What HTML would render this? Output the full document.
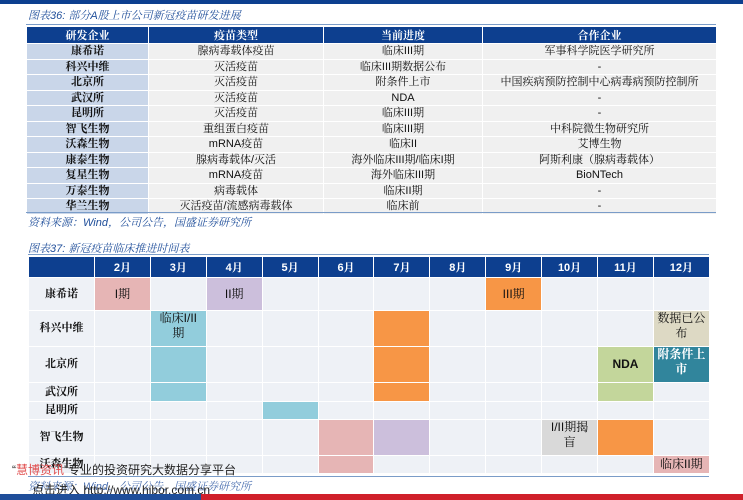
<!DOCTYPE html>
<html><head><meta charset="utf-8"><style>
body{margin:0;width:743px;height:500px;overflow:hidden;background:#fff;font-family:"Liberation Sans","Noto Serif CJK SC","Noto Sans CJK SC",serif;position:relative}
.abs{position:absolute}
.ttl{color:#1f4e9a;font-style:italic;font-size:11px}
table{border-collapse:collapse;table-layout:fixed;position:absolute}
td{border:1px solid #fff;text-align:center;font-size:11px;padding:0;color:#111;line-height:12px;overflow:hidden}
.t1 th,.t2 th{background:#0d3f8f;color:#fff;font-size:11px;font-weight:bold;border:1px solid #fff;padding:0}
.t1 td{background:#f0f0f0;height:14.5px}
.t1 td.f{background:#c9d6e9;font-weight:bold}
.t2 td{background:#eef1f6;font-size:12px;line-height:15px}
.t2 td.f{font-weight:bold;font-size:11px}
.pk{background:#e6b5b5!important}.lv{background:#ccbfdc!important}.or{background:#f79646!important}
.lb{background:#92cddc!important}.kh{background:#ddd9c4!important}.te{background:#31859c!important;color:#fff!important;font-weight:bold}
.gr{background:#c3d69b!important}.gy{background:#d9d9d9!important}
</style></head><body>
<div class="abs" style="left:0;top:0;width:743px;height:4px;background:#0d3f8f"></div>
<div class="abs ttl" style="left:28px;top:7px">图表36: 部分A股上市公司新冠疫苗研发进展</div>
<div class="abs" style="left:26px;top:24px;width:690px;height:1px;background:#7a9cc8"></div>
<table class="t1" style="left:26px;top:26px;width:690px">
<col style="width:122px"><col style="width:175px"><col style="width:159px"><col style="width:234px">
<tr style="height:14px"><th>研发企业</th><th>疫苗类型</th><th>当前进度</th><th>合作企业</th></tr>
<tr><td class="f">康希诺</td><td>腺病毒载体疫苗</td><td>临床III期</td><td>军事科学院医学研究所</td></tr>
<tr><td class="f">科兴中维</td><td>灭活疫苗</td><td>临床III期数据公布</td><td>-</td></tr>
<tr><td class="f">北京所</td><td>灭活疫苗</td><td>附条件上市</td><td>中国疾病预防控制中心病毒病预防控制所</td></tr>
<tr><td class="f">武汉所</td><td>灭活疫苗</td><td>NDA</td><td>-</td></tr>
<tr><td class="f">昆明所</td><td>灭活疫苗</td><td>临床III期</td><td>-</td></tr>
<tr><td class="f">智飞生物</td><td>重组蛋白疫苗</td><td>临床III期</td><td>中科院微生物研究所</td></tr>
<tr><td class="f">沃森生物</td><td>mRNA疫苗</td><td>临床II</td><td>艾博生物</td></tr>
<tr><td class="f">康泰生物</td><td>腺病毒载体/灭活</td><td>海外临床III期/临床I期</td><td>阿斯利康（腺病毒载体）</td></tr>
<tr><td class="f">复星生物</td><td>mRNA疫苗</td><td>海外临床III期</td><td>BioNTech</td></tr>
<tr><td class="f">万泰生物</td><td>病毒载体</td><td>临床II期</td><td>-</td></tr>
<tr><td class="f">华兰生物</td><td>灭活疫苗/流感病毒载体</td><td>临床前</td><td>-</td></tr>
</table>
<div class="abs" style="left:26px;top:212px;width:690px;height:1px;background:#7a9cc8"></div>
<div class="abs ttl" style="left:28px;top:214px">资料来源：Wind，公司公告，国盛证券研究所</div>
<div class="abs ttl" style="left:28px;top:240px">图表37: 新冠疫苗临床推进时间表</div>
<div class="abs" style="left:28px;top:254px;width:681px;height:1px;background:#7a9cc8"></div>
<table class="t2" style="left:28px;top:256px;width:681px">
<col style="width:66px"><col span="11" style="width:55.9px">
<tr style="height:21px"><th></th><th>2月</th><th>3月</th><th>4月</th><th>5月</th><th>6月</th><th>7月</th><th>8月</th><th>9月</th><th>10月</th><th>11月</th><th>12月</th></tr>
<tr style="height:33px"><td class="f">康希诺</td><td class="pk">I期</td><td></td><td class="lv">II期</td><td></td><td></td><td></td><td></td><td class="or">III期</td><td></td><td></td><td></td></tr>
<tr style="height:36px"><td class="f">科兴中维</td><td></td><td class="lb" style="vertical-align:top">临床I/II<br>期</td><td></td><td></td><td></td><td class="or"></td><td></td><td></td><td></td><td></td><td class="kh" style="vertical-align:top">数据已公<br>布</td></tr>
<tr style="height:36px"><td class="f">北京所</td><td></td><td class="lb"></td><td></td><td></td><td></td><td class="or"></td><td></td><td></td><td></td><td class="gr" style="font-weight:bold">NDA</td><td class="te" style="vertical-align:top">附条件上<br>市</td></tr>
<tr style="height:19px"><td class="f">武汉所</td><td></td><td class="lb"></td><td></td><td></td><td></td><td class="or"></td><td></td><td></td><td></td><td class="gr"></td><td></td></tr>
<tr style="height:18px"><td class="f">昆明所</td><td></td><td></td><td></td><td class="lb"></td><td></td><td></td><td></td><td></td><td></td><td></td><td></td></tr>
<tr style="height:36px"><td class="f">智飞生物</td><td></td><td></td><td></td><td></td><td class="pk"></td><td class="lv"></td><td></td><td></td><td class="gy" style="vertical-align:top">I/II期揭<br>盲</td><td class="or"></td><td></td></tr>
<tr style="height:18px"><td class="f">沃森生物</td><td></td><td></td><td></td><td></td><td class="pk"></td><td></td><td></td><td></td><td></td><td></td><td class="pk">临床II期</td></tr>
</table>
<div class="abs" style="left:28px;top:476px;width:681px;height:1px;background:#7a9cc8"></div>
<div class="abs ttl" style="left:28px;top:478px;color:#4a6fb0">资料来源：Wind，公司公告，国盛证券研究所</div>
<div class="abs" style="left:12px;top:461px;font-size:12px;color:#222;font-family:'Liberation Sans','Noto Sans CJK SC',sans-serif">“<span style="color:#e05050">慧博资讯</span>”专业的投资研究大数据分享平台</div>
<div class="abs" style="left:32px;top:481px;font-size:12px;color:#222;font-family:'Liberation Sans','Noto Sans CJK SC',sans-serif">点击进入 http://www.hibor.com.cn</div>
<div class="abs" style="left:0;top:494px;width:201px;height:6px;background:#1f4e9a"></div>
<div class="abs" style="left:201px;top:494px;width:542px;height:6px;background:#d0202a"></div>
</body></html>
